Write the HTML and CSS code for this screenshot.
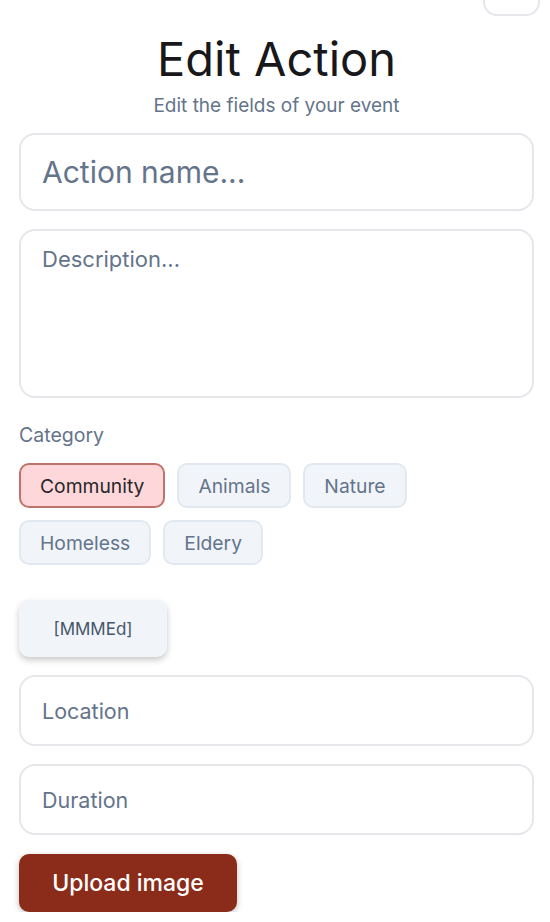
FILE: index.html
```html
<!DOCTYPE html>
<html lang="en">
<head>
<meta charset="utf-8">
<title>Edit Action</title>
<link rel="stylesheet" href="styles.css">
</head>
<body>
<div class="page">
  <div class="topbar"><button class="top-btn" aria-label="close"></button></div>
  <h1 class="title">Edit Action</h1>
  <p class="subtitle">Edit the fields of your event</p>
  <form class="form">
    <input class="field field-name" placeholder="Action name...">
    <textarea class="field field-desc" placeholder="Description..."></textarea>
    <div class="label">Category</div>
    <div class="chips">
      <span class="chip chip-active">Community</span>
      <span class="chip">Animals</span>
      <span class="chip">Nature</span>
      <span class="chip">Homeless</span>
      <span class="chip">Eldery</span>
    </div>
    <div class="date-row"><button type="button" class="date-btn">[MMMEd]</button></div>
    <input class="field field-sm" placeholder="Location">
    <input class="field field-sm" placeholder="Duration">
    <div class="upload-row"><button type="button" class="upload-btn">Upload image</button></div>
  </form>
</div>
</body>
</html>
```

FILE: styles.css
```css
* { box-sizing: border-box; }
html, body { margin: 0; padding: 0; background: #fff; }
body { font-family: Inter, "Noto Sans", sans-serif; color: #111; overflow: hidden; }
.page { padding: 0 16px 0 19px; }
.topbar { display: flex; justify-content: flex-end; height: 16px; }
.top-btn {
  width: 57px; height: 40px; margin-top: -24px; margin-right: -6px;
  border: 2px solid #e5e7eb; border-radius: 14px; background: #fff;
}
.title {
  margin: 15px 0 0; text-align: center; font-weight: 400;
  font-size: 47px; line-height: 56px; color: #18181b; letter-spacing: 0;
}
.subtitle {
  margin: 7px 0 0; text-align: center; font-size: 19px; line-height: 24px; color: #64748b;
}
.form { display: flex; flex-direction: column; margin-top: 15px; }
.field {
  display: block; width: 100%; border: 2px solid #e5e7eb; border-radius: 16px;
  background: #fff; font-family: Inter, sans-serif; color: #111; outline: none;
}
.field::placeholder { color: #64748b; opacity: 1; }
.field-name { height: 78px; padding: 0 21px; font-size: 30px; }
.field-desc { height: 169px; margin-top: 18px; padding: 15px 21px; font-size: 22px; resize: none; }
.field-sm { height: 71px; padding: 0 21px; font-size: 21.5px; margin-top: 18px; }
.label { margin-top: 25px; font-size: 19.5px; line-height: 24px; color: #64748b; }
.chips { display: flex; flex-wrap: wrap; gap: 12px; margin-top: 16px; width: 420px; }
.chip {
  height: 45px; padding: 0 19px; display: flex; align-items: center;
  background: #f1f5f9; border: 2px solid #e2e8f0; border-radius: 10px;
  font-size: 19.3px; color: #64748b;
}
.chip-active { background: #fed7da; border-color: #c0736a; color: #27272a; }
.date-row { margin-top: 35px; }
.date-btn {
  width: 148px; height: 57px; border: none; border-radius: 10px; background: #f1f5f9;
  box-shadow: 0 3px 6px rgba(0,0,0,0.22); font-family: Inter, sans-serif; font-size: 17px; color: #475569;
}
.upload-row { margin-top: 19px; }
.upload-btn {
  width: 218px; height: 58px; border: none; border-radius: 10px; background: #8b2c1b;
  color: #fff; font-family: Inter, sans-serif; font-size: 23px; font-weight: 500;
  box-shadow: 0 2px 6px rgba(0,0,0,0.25);
}
```
